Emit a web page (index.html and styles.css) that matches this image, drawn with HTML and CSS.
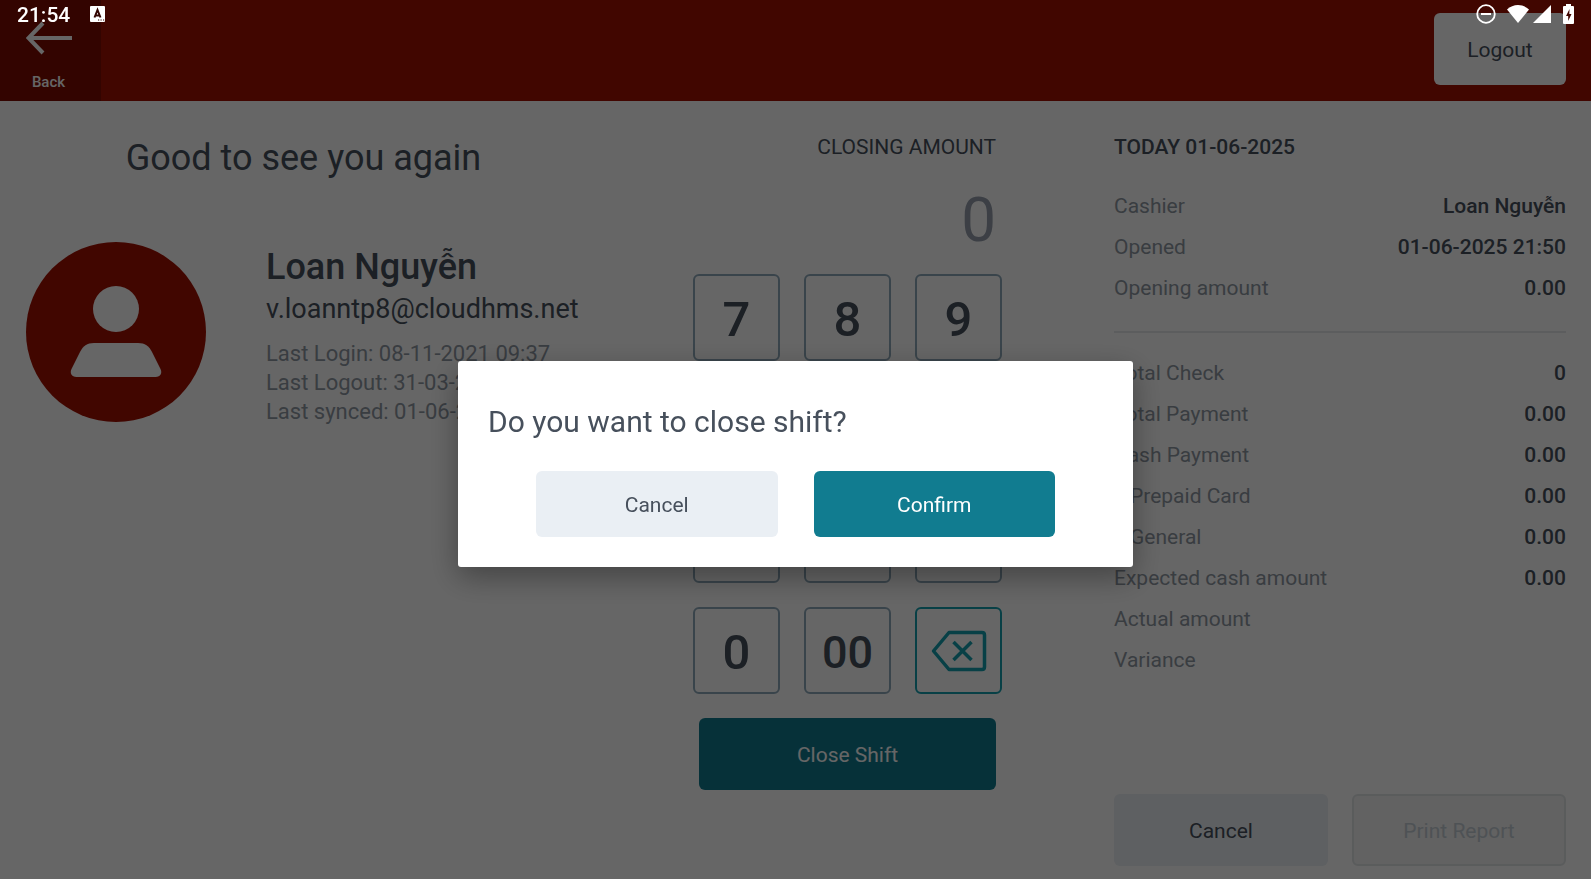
FILE: index.html
```html
<!DOCTYPE html>
<html lang="en">
<head>
    <meta charset="UTF-8">
    <meta name="viewport" content="width=device-width, initial-scale=1.0">
    <title>Close Shift</title>
    <link rel="stylesheet" href="styles.css">
</head>
<body>
    <!-- device status bar -->
    <div class="status-bar">
        <span class="status-time">21:54</span>
        <svg class="status-app" width="15" height="16" viewBox="0 0 15 16">
            <rect width="15" height="16" rx="1" fill="#fff"/>
            <path d="M4.500 11.500 7.500 4l3 7.500M5.500 9.500h4" fill="none" stroke="#330400" stroke-width="2"/>
            <path d="M8 14h1.200M10.500 14h1.200M13 14h1.200" stroke="#330400" stroke-width="1.200"/>
        </svg>
        <div class="status-icons">
            <svg width="20" height="20" viewBox="0 0 20 20">
                <circle cx="10" cy="10" r="8.800" fill="none" stroke="#fff" stroke-width="1.800"/>
                <path d="M5 10h10" stroke="#fff" stroke-width="2"/>
            </svg>
            <svg class="icon-wifi" width="22" height="20" viewBox="0 0 22 20">
                <path d="M11 19 0 5.500C3 2.500 7 1 11 1s8 1.500 11 4.500z" fill="#fff"/>
            </svg>
            <svg class="icon-signal" width="18" height="20" viewBox="0 0 18 20">
                <path d="M18 1v18H0z" fill="#fff"/>
            </svg>
            <svg class="icon-battery" width="11" height="20" viewBox="0 0 11 20">
                <path d="M3 0h5v2h2a1 1 0 0 1 1 1v16a1 1 0 0 1-1 1H1a1 1 0 0 1-1-1V3a1 1 0 0 1 1-1h2z" fill="#fff"/>
                <path d="M6.500 5 3 12h2.200v5L8.500 10H6.300z" fill="#410600"/>
            </svg>
        </div>
    </div>

    <div class="page">
        <header class="header">
            <button class="back-btn">
                <svg width="46" height="34" viewBox="0 0 46 34">
                    <path d="M46 17H3M17 2 2.500 17 17 32" fill="none" stroke="#fff" stroke-width="4"/>
                </svg>
                <span>Back</span>
            </button>
            <button class="btn logout-btn">Logout</button>
        </header>

        <main class="content">
            <section class="user">
                <h1>Good to see you again</h1>
                <div class="user-info">
                    <svg class="avatar" width="180" height="180" viewBox="0 0 180 180">
                        <circle cx="90" cy="90" r="90" fill="#a30f00"/>
                        <circle cx="90" cy="67" r="23" fill="#fff"/>
                        <path d="M68 101h44c7 0 11 3 14 9l8.500 17c2 4 0 8-5 8h-79c-5 0-7-4-5-8L54 110c3-6 7-9 14-9z" fill="#fff"/>
                    </svg>
                    <div class="user-text">
                        <h2>Loan Nguyễn</h2>
                        <p class="email">v.loanntp8@cloudhms.net</p>
                        <p>Last Login: 08-11-2021 09:37</p>
                        <p>Last Logout: 31-03-2025</p>
                        <p>Last synced: 01-06-2025</p>
                    </div>
                </div>
            </section>

            <section class="closing">
                <label for="amount">CLOSING AMOUNT</label>
                <input type="text" id="amount" placeholder="0">
                <div class="keypad">
                    <button>7</button>
                    <button>8</button>
                    <button>9</button>
                    <button>4</button>
                    <button>5</button>
                    <button>6</button>
                    <button>1</button>
                    <button>2</button>
                    <button>3</button>
                    <button>0</button>
                    <button class="double">00</button>
                    <button class="delete" aria-label="Delete">
                        <svg width="56" height="42" viewBox="0 0 56 42">
                            <path d="M18 2.500h33q2.500 0 2.500 2.500v32q0 2.500-2.500 2.500H18L2.500 21z" fill="none" stroke="#14a0b0" stroke-width="3.500" stroke-linejoin="round"/>
                            <path d="m22.500 12 18 18M40.500 12l-18 18" stroke="#14a0b0" stroke-width="3.500"/>
                        </svg>
                    </button>
                </div>
                <button class="btn close-btn">Close Shift</button>
            </section>

            <section class="report">
                <h3>TODAY 01-06-2025</h3>
                <table>
                    <tr><th>Cashier</th><td>Loan Nguyễn</td></tr>
                    <tr><th>Opened</th><td>01-06-2025 21:50</td></tr>
                    <tr><th>Opening amount</th><td>0.00</td></tr>
                </table>
                <hr>
                <table>
                    <tr><th>Total Check</th><td>0</td></tr>
                    <tr><th>Total Payment</th><td>0.00</td></tr>
                    <tr><th>Cash Payment</th><td>0.00</td></tr>
                    <tr class="sub"><th>Prepaid Card</th><td>0.00</td></tr>
                    <tr class="sub"><th>General</th><td>0.00</td></tr>
                    <tr><th>Expected cash amount</th><td>0.00</td></tr>
                    <tr><th>Actual amount</th><td></td></tr>
                    <tr><th>Variance</th><td></td></tr>
                </table>
                <div class="report-actions">
                    <button class="btn cancel-btn">Cancel</button>
                    <button class="btn print-btn" disabled>Print Report</button>
                </div>
            </section>
        </main>
    </div>

    <!-- confirm dialog -->
    <div class="overlay">
        <div class="dialog" role="dialog" aria-labelledby="dialogTitle">
            <h2 id="dialogTitle">Do you want to close shift?</h2>
            <div class="dialog-actions">
                <button class="btn cancel-btn">Cancel</button>
                <button class="btn confirm-btn">Confirm</button>
            </div>
        </div>
    </div>
</body>
</html>
```

FILE: styles.css
```css
* {
    box-sizing: border-box;
}

body {
    margin: 0;
    font-family: Roboto, "Noto Sans", sans-serif;
    font-size: 21px;
    line-height: 29px;
    color: #47505c;
    background-color: #fff;
}

h1, h2, h3, p {
    margin: 0;
}

button, input {
    padding: 0;
    border: none;
    font-family: inherit;
    font-size: inherit;
    color: inherit;
    background: none;
}

svg {
    display: block;
}

.btn {
    height: 72px;
    padding-top: 2px;
    border-radius: 6px;
}

/* status bar */
.status-bar {
    position: fixed;
    top: 0;
    left: 0;
    right: 0;
    z-index: 20;
    display: flex;
    align-items: center;
    height: 28px;
    padding: 0 17px;
    color: #fff;
}

.status-time {
    padding-top: 2px;
    font-weight: 500;
}

.status-app {
    margin-left: 20px;
}

.status-icons {
    display: flex;
    align-items: center;
    margin-left: auto;
}

.icon-wifi {
    margin-left: 11px;
}

.icon-signal {
    margin-left: 4px;
}

.icon-battery {
    margin-left: 12px;
}

/* page */
.page {
    display: flex;
    flex-direction: column;
    min-height: 100vh;
}

.header {
    display: flex;
    justify-content: space-between;
    align-items: flex-start;
    height: 101px;
    padding-right: 25px;
    background-color: #a30f00;
}

.back-btn {
    display: flex;
    flex-direction: column;
    align-items: center;
    gap: 17px;
    width: 101px;
    height: 101px;
    padding: 21px 4px 0 0;
    font-size: 15px;
    font-weight: 500;
    line-height: 20px;
    color: #fff;
    background-color: #800b00;
}

.logout-btn {
    width: 132px;
    margin-top: 13px;
    background-color: #fff;
}

.content {
    flex: 1;
    display: grid;
    grid-template-columns: 1fr 309px 452px;
    gap: 112px;
    padding: 32px 25px 13px 26px;
}

/* user */
.user h1 {
    margin-top: 3px;
    font-size: 36px;
    font-weight: 400;
    line-height: 44px;
    text-align: center;
}

.user-info {
    display: flex;
    gap: 60px;
    margin-top: 62px;
}

.avatar {
    flex: none;
}

.user-text {
    padding-top: 1px;
    font-size: 22px;
    color: #8f98a3;
    white-space: nowrap;
}

.user-text h2 {
    font-size: 36px;
    font-weight: 500;
    line-height: 48px;
    color: #47505c;
}

.user-text .email {
    margin-bottom: 12px;
    font-size: 27px;
    line-height: 36px;
    color: #47505c;
}

/* closing amount */
.closing {
    display: flex;
    flex-direction: column;
}

.closing label {
    padding: 0 6px;
    text-align: right;
}

#amount {
    width: 100%;
    height: 80px;
    margin: 17px 0 15px;
    padding: 0 6px;
    font-size: 62px;
    text-align: right;
}

#amount::placeholder {
    color: #969fac;
    opacity: 1;
}

.keypad {
    display: grid;
    grid-template-columns: repeat(3, 87px);
    justify-content: space-between;
    row-gap: 24px;
}

.keypad button {
    display: flex;
    align-items: center;
    justify-content: center;
    height: 87px;
    padding-top: 3px;
    border: 2px solid #90aabb;
    border-radius: 6px;
    font-size: 49px;
    font-weight: 500;
}

.keypad .double {
    font-size: 45px;
}

.keypad .delete {
    padding-top: 0;
    border-color: #14a0b0;
}

.close-btn {
    margin: 24px 6px 0;
    color: #fff;
    background-color: #117c90;
}

/* report */
.report {
    display: flex;
    flex-direction: column;
}

.report h3 {
    margin-bottom: 24px;
    font-size: 21px;
    font-weight: 500;
}

.report table {
    width: 100%;
    border-collapse: collapse;
}

.report th,
.report td {
    height: 41px;
    padding: 0;
}

.report th {
    font-weight: 400;
    text-align: left;
    color: #8f98a3;
}

.report td {
    font-weight: 500;
    text-align: right;
}

.report .sub th {
    padding-left: 16px;
}

.report hr {
    width: 100%;
    height: 2px;
    margin: 22px 0 20px;
    border: none;
    background-color: #e6e8ea;
}

.report-actions {
    display: grid;
    grid-template-columns: 1fr 1fr;
    gap: 24px;
    margin-top: auto;
}

.cancel-btn {
    background-color: #eaeff4;
}

.print-btn {
    border: 2px solid #e2e5e7;
    color: #c4cdd4;
    background-color: #f5f5f5;
}

/* dialog */
.overlay {
    position: fixed;
    top: 0;
    left: 0;
    right: 0;
    bottom: 0;
    z-index: 10;
    display: flex;
    align-items: center;
    justify-content: center;
    padding-top: 49px;
    background-color: rgba(0, 0, 0, 0.6);
}

.dialog {
    width: 675px;
    padding: 41px 30px 30px;
    border-radius: 3px;
    background-color: #fff;
    box-shadow: 0 10px 30px rgba(0, 0, 0, 0.35);
}

.dialog h2 {
    font-size: 30px;
    font-weight: 400;
    line-height: 40px;
}

.dialog-actions {
    display: flex;
    gap: 36px;
    margin-top: 29px;
    padding: 0 48px;
}

.dialog-actions .btn {
    flex: 1;
    height: 66px;
}

.confirm-btn {
    color: #fff;
    background-color: #117c90;
}
```
